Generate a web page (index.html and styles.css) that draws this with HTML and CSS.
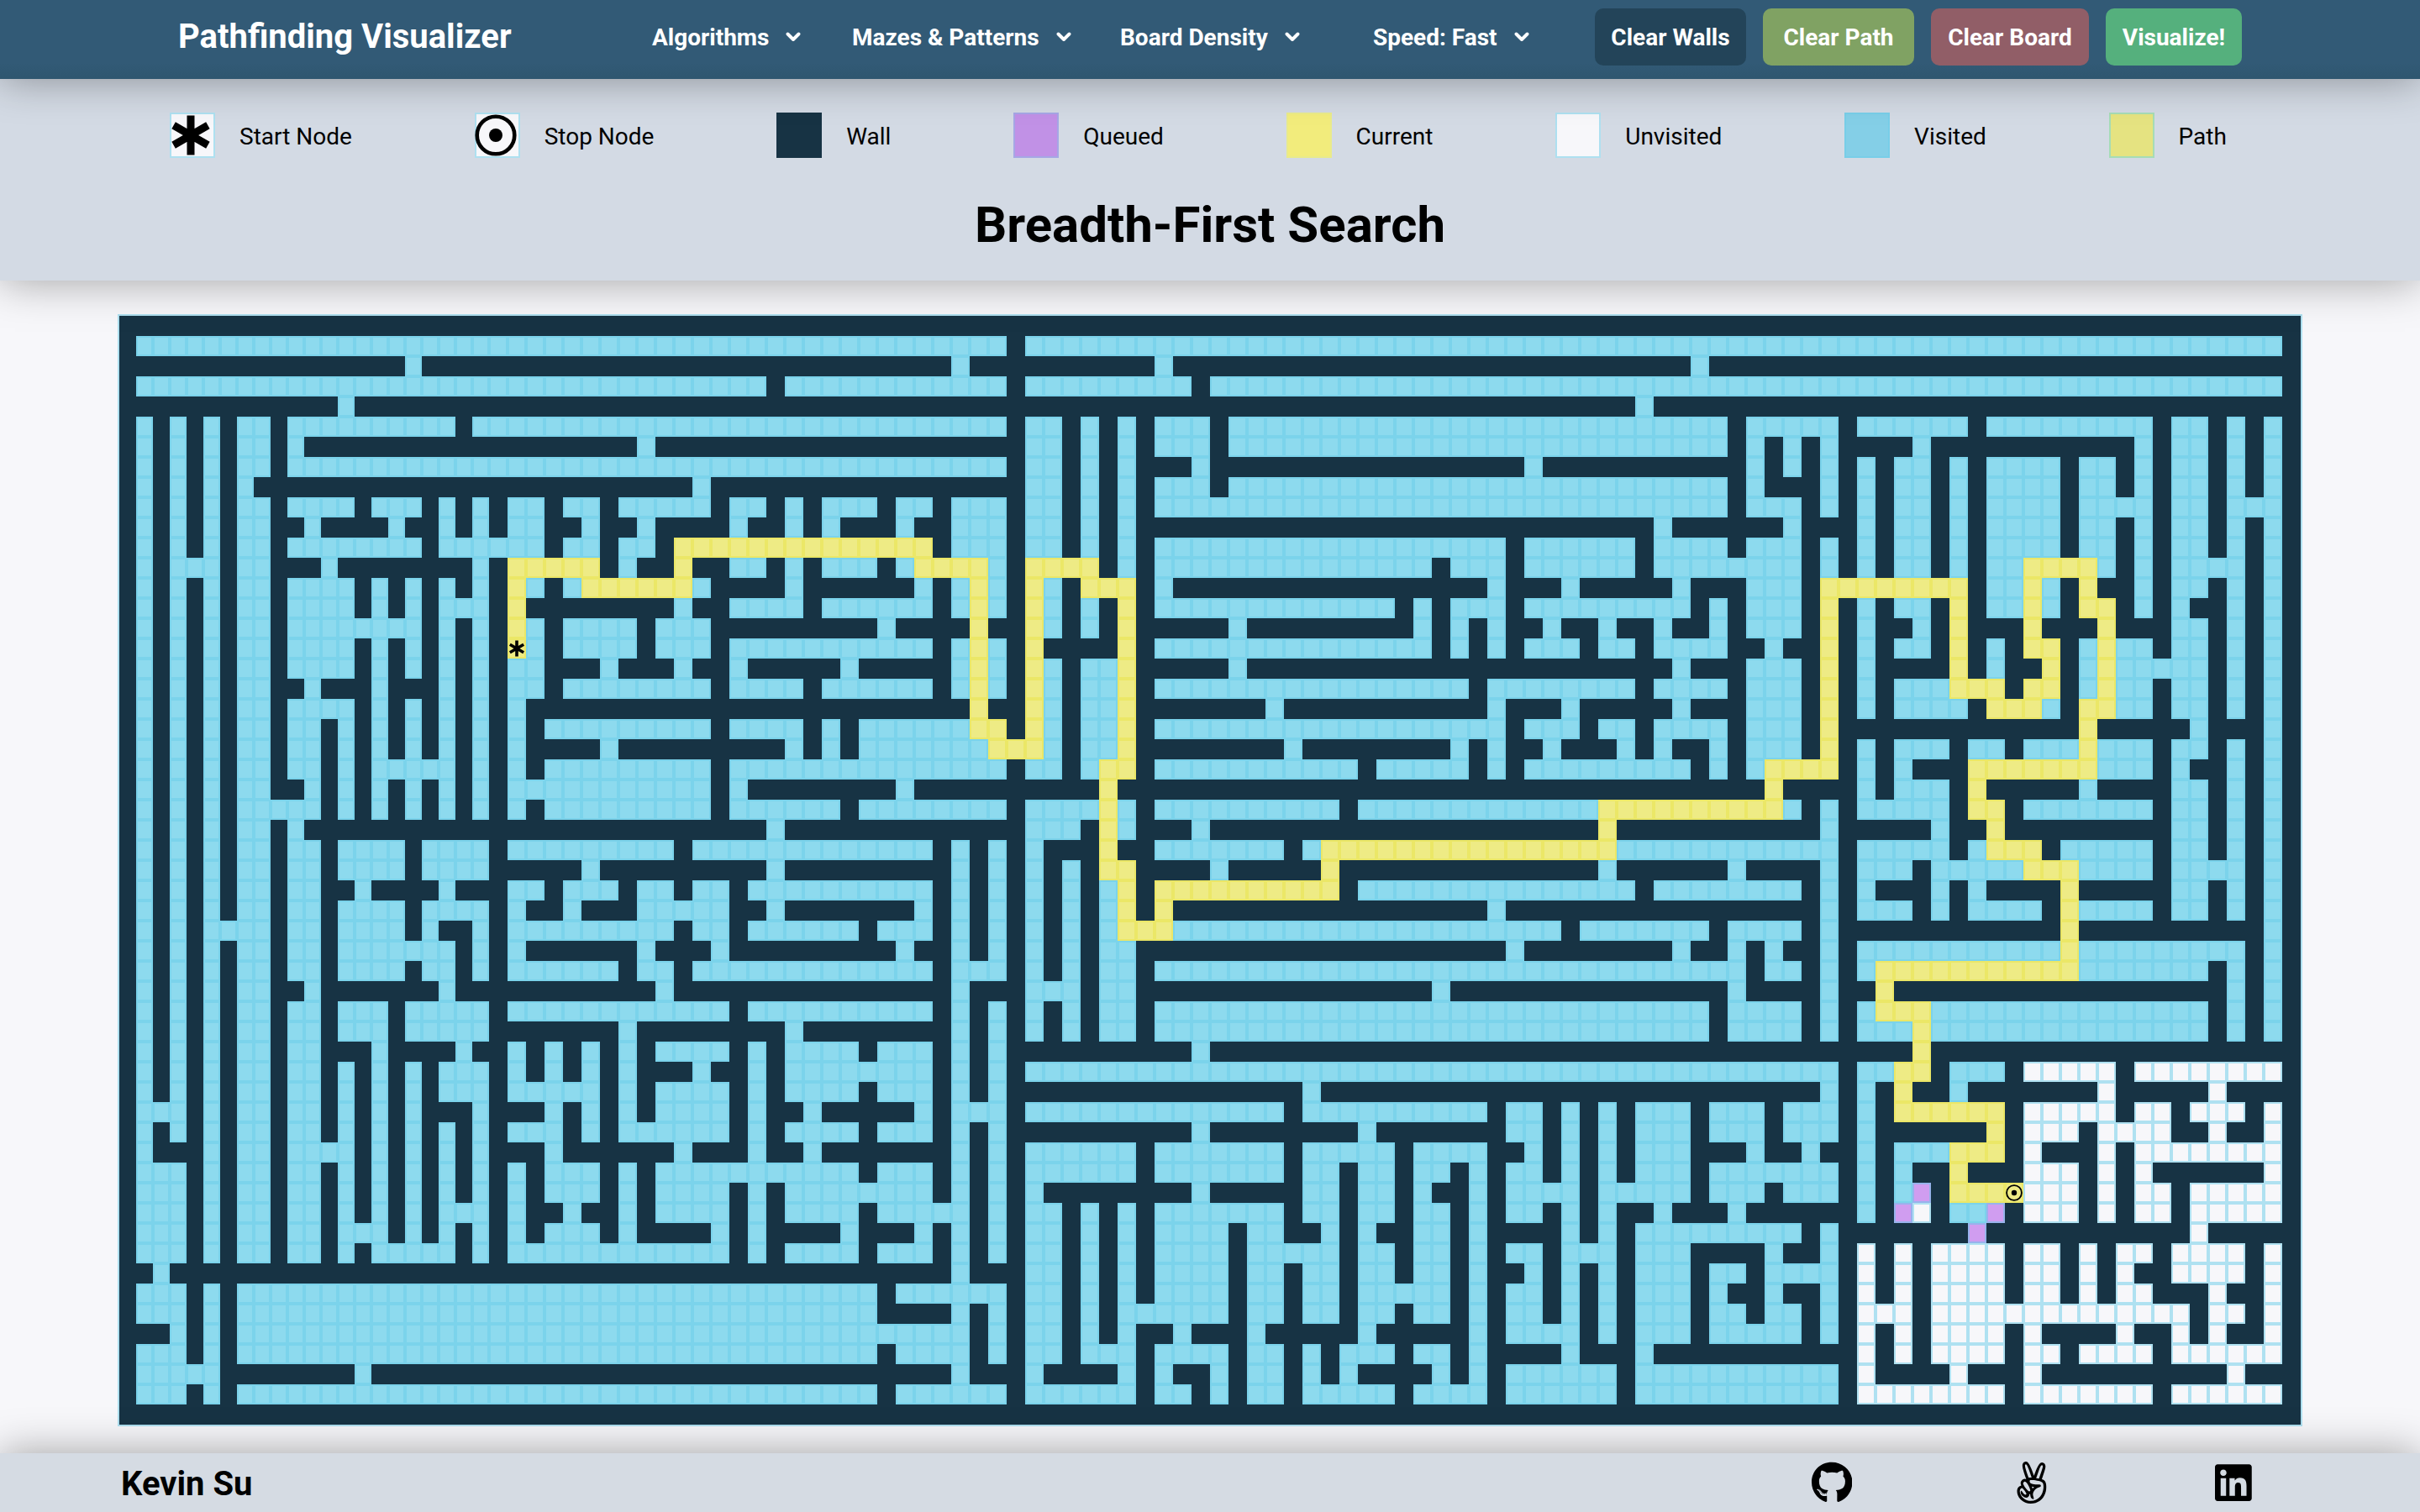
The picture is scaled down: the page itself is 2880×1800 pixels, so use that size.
FILE: index.html
```html
<!DOCTYPE html>
<html lang="en">
<head>
<meta charset="utf-8">
<title>Pathfinding Visualizer</title>
<link rel="stylesheet" href="styles.css">
</head>
<body>
<svg class="defs" aria-hidden="true">
  <symbol id="chevron" viewBox="0 0 18 12"><path d="M2.500 2.500 9 9l6.500-6.500" fill="none" stroke="currentColor" stroke-width="3.900" stroke-linecap="round" stroke-linejoin="round"/></symbol>
  <symbol id="asterisk" viewBox="0 0 50 50"><path d="M25 1.500v47M4.600 13.250l40.800 23.500M45.400 13.250 4.600 36.750" fill="none" stroke="currentColor" stroke-width="9"/></symbol>
  <symbol id="target" viewBox="0 0 50 50"><circle cx="25" cy="25" r="22.300" fill="none" stroke="currentColor" stroke-width="4.600"/><circle cx="25" cy="25" r="8" fill="currentColor"/></symbol>
</svg>

<nav class="navbar">
  <h1 class="brand">Pathfinding Visualizer</h1>
  <ul class="menu">
    <li class="menu-item algorithms">Algorithms<svg class="chevron"><use href="#chevron"/></svg></li>
    <li class="menu-item mazes">Mazes &amp; Patterns<svg class="chevron"><use href="#chevron"/></svg></li>
    <li class="menu-item density">Board Density<svg class="chevron"><use href="#chevron"/></svg></li>
    <li class="menu-item speed">Speed: Fast<svg class="chevron"><use href="#chevron"/></svg></li>
  </ul>
  <div class="actions">
    <button class="btn clear-walls">Clear Walls</button>
    <button class="btn clear-path">Clear Path</button>
    <button class="btn clear-board">Clear Board</button>
    <button class="btn visualize">Visualize!</button>
  </div>
</nav>

<header class="info">
  <ul class="legend">
    <li><span class="swatch unvisited"><svg><use href="#asterisk"/></svg></span>Start Node</li>
    <li><span class="swatch unvisited"><svg><use href="#target"/></svg></span>Stop Node</li>
    <li><span class="swatch wall"></span>Wall</li>
    <li><span class="swatch queued"></span>Queued</li>
    <li><span class="swatch current"></span>Current</li>
    <li><span class="swatch unvisited"></span>Unvisited</li>
    <li><span class="swatch visited"></span>Visited</li>
    <li><span class="swatch path"></span>Path</li>
  </ul>
  <h2 class="algorithm">Breadth-First Search</h2>
</header>

<main class="board-area">
  <div class="board" id="board"></div>
</main>

<footer class="footer">
  <span class="author">Kevin Su</span>
  <div class="links">
    <svg class="icon" viewBox="0 0 496 512"><path d="M165.900 397.400c0 2-2.300 3.600-5.200 3.600-3.300.3-5.600-1.300-5.600-3.600 0-2 2.300-3.600 5.200-3.600 3-.3 5.600 1.300 5.600 3.600zm-31.100-4.500c-.7 2 1.300 4.300 4.300 4.900 2.600 1 5.600 0 6.200-2s-1.300-4.300-4.300-5.200c-2.600-.7-5.500.3-6.200 2.300zm44.200-1.700c-2.900.7-4.900 2.600-4.600 4.900.3 2 2.900 3.300 5.900 2.600 2.900-.7 4.900-2.600 4.600-4.600-.3-1.900-3-3.200-5.900-2.900zM244.800 8C106.100 8 0 113.300 0 252c0 110.900 69.800 205.800 169.500 239.200 12.800 2.300 17.300-5.600 17.300-12.100 0-6.200-.3-40.400-.3-61.400 0 0-70 15-84.700-29.800 0 0-11.400-29.100-27.800-36.600 0 0-22.900-15.700 1.600-15.400 0 0 24.900 2 38.600 25.800 21.900 38.600 58.600 27.500 72.900 20.900 2.300-16 8.800-27.100 16-33.700-55.900-6.200-112.300-14.300-112.300-110.500 0-27.500 7.600-41.300 23.600-58.900-2.600-6.500-11.100-33.300 2.600-67.900 20.900-6.500 69 27 69 27 20-5.600 41.500-8.500 62.800-8.500s42.800 2.900 62.800 8.500c0 0 48.100-33.600 69-27 13.700 34.700 5.200 61.400 2.600 67.900 16 17.700 25.800 31.500 25.800 58.900 0 96.500-58.900 104.200-114.800 110.500 9.200 7.900 17 22.900 17 46.400 0 33.700-.3 75.400-.3 83.600 0 6.500 4.600 14.400 17.300 12.100C428.200 457.800 496 362.900 496 252 496 113.300 383.500 8 244.800 8zM97.200 352.900c-1.300 1-1 3.300.7 5.200 1.600 1.600 3.900 2.300 5.200 1 1.300-1 1-3.300-.7-5.200-1.600-1.600-3.900-2.300-5.200-1zm-10.800-8.100c-.7 1.300.3 2.900 2.300 3.900 1.600 1 3.600.7 4.300-.7.7-1.300-.3-2.900-2.300-3.900-2-.6-3.600-.3-4.300.7zm32.400 35.600c-1.600 1.300-1 4.300 1.300 6.200 2.300 2.300 5.200 2.600 6.500 1 1.300-1.300.7-4.300-1.300-6.200-2.200-2.300-5.200-2.600-6.500-1zm-11.400-14.700c-1.600 1-1.600 3.600 0 5.900 1.600 2.300 4.300 3.300 5.600 2.300 1.600-1.300 1.600-3.900 0-6.200-1.400-2.300-4-3.300-5.600-2z"/></svg>
    <svg class="icon" viewBox="0 0 448 512"><path d="M347.100 215.400c11.700-32.600 45.400-126.900 45.400-157.100 0-26.600-15.700-48.900-43.700-48.900-44.600 0-84.600 131.700-97.100 163.100C242 144 196.600 0 156.600 0c-31.100 0-45.700 22.900-45.700 51.700 0 35.300 34.200 126.800 46.600 162-6.300-2.300-13.100-4.300-20-4.300-23.400 0-48.300 29.100-48.300 52.600 0 8.900 4.900 21.400 8 29.700-36.900 10-51.100 34.600-51.100 71.700C46 435.600 114.400 512 210.600 512c118 0 191.400-88.600 191.400-202.900 0-43.100-6.900-82-54.900-93.700zM311.700 108c4-12.300 21.100-64.300 37.100-64.300 8.600 0 10.900 8.900 10.900 16 0 19.100-38.600 124.600-47.100 148l-34-6 33.100-93.700zM142.300 48.300c0-11.900 14.500-45.700 46.300 47.100l34.600 100.300c-15.600-1.300-27.700-3-35.400 1.400-10.900-28.800-45.500-119.700-45.500-148.800zM140 244c29.300 0 67.100 94.600 67.100 107.400 0 5.100-4.900 11.400-10.600 11.400-20.900 0-76.900-76.900-76.900-97.700.1-7.700 12.700-21.100 20.400-21.100zm184.300 186.300c-29.100 32-66.300 48.600-109.700 48.600-59.400 0-106.300-32.600-128.900-88.300-17.100-43.400 3.800-68.300 20.600-68.300 11.400 0 54.300 60.300 54.300 73.100 0 4.900-7.700 8.300-11.700 8.300-16.100 0-22.400-15.500-51.100-51.400-29.700 29.700 20.500 86.900 58.300 86.900 26.100 0 43.100-24.200 38-42 3.700 0 8.300.3 11.700-.6 1.100 27.100 9.100 59.400 41.700 61.700 0-.9 2-7.100 2-7.400 0-17.400-10.600-32.600-10.600-50.300 0-28.300 21.700-55.700 43.700-71.700 8-6 17.700-9.700 27.100-13.100 9.700-3.700 20-8 27.400-15.400-1.100-11.200-5.700-21.100-16.900-21.100-27.700 0-120.600 4-120.600-39.700 0-6.700.1-13.100 17.400-13.100 32.300 0 114.300 8 138.300 29.100 18.100 16.100 24.300 113.200-31 174.700zm-98.600-126c9.700 3.100 19.700 4 29.700 6-7.400 5.400-14 12-20.300 19.100-2.800-8.500-6.200-16.800-9.400-25.100z"/></svg>
    <svg class="icon" viewBox="0 0 448 512"><path d="M416 32H31.900C14.300 32 0 46.500 0 64.300v383.400C0 465.500 14.300 480 31.900 480H416c17.600 0 32-14.500 32-32.300V64.300c0-17.800-14.400-32.300-32-32.300zM135.400 416H69V202.200h66.500V416zm-33.200-243c-21.300 0-38.500-17.300-38.500-38.500S80.900 96 102.200 96c21.200 0 38.500 17.300 38.500 38.500 0 21.300-17.200 38.500-38.500 38.500zm282.100 243h-66.400V312c0-24.800-.5-56.700-34.500-56.700-34.600 0-39.900 27-39.900 54.900V416h-66.400V202.200h63.700v29.200h.9c8.900-16.800 30.600-34.500 62.900-34.500 67.200 0 79.700 44.300 79.700 101.900V416z"/></svg>
  </div>
</footer>
<script src="board.js"></script>
</body>
</html>
```
FILE: styles.css
```css
* { box-sizing: border-box; }

body {
  margin: 0;
  height: 1800px;
  display: flex;
  flex-direction: column;
  overflow: hidden;
  background: #f7f7fa;
  color: #000;
  font-family: Roboto, "Liberation Sans", sans-serif;
  font-size: 28px;
}

ul { list-style: none; margin: 0; padding: 0; }
.defs { display: none; }

/* Top bar */
.navbar {
  position: relative;
  z-index: 2;
  flex: none;
  height: 94px;
  padding: 10px 212px 16px;
  display: flex;
  align-items: center;
  background: linear-gradient(#325a76 80%, #2e566f);
  box-shadow: 0 0 50px rgba(0, 0, 0, .36);
  color: #fff;
}
.brand { width: 564px; margin: 0; font-size: 40px; line-height: 70px; font-weight: 700; white-space: nowrap; }
.menu { display: flex; font-weight: 700; line-height: 66px; padding-top: 2px; }
.menu-item { display: flex; align-items: center; white-space: nowrap; }
.algorithms { width: 238px; }
.mazes { width: 319px; }
.density { width: 301px; }
.speed { width: 264px; }
.chevron { width: 18px; height: 12px; margin: -2px 0 0 20px; }
.actions { display: flex; gap: 20px; }
.btn {
  width: 180px;
  height: 68px;
  padding: 2px 0 0;
  border: 0;
  border-radius: 10px;
  color: #fff;
  font: 700 28px/66px Roboto, "Liberation Sans", sans-serif;
  white-space: nowrap;
}
.clear-walls { background: #234459; }
.clear-path { background: #80a263; }
.clear-board { width: 188px; background: #915e67; }
.visualize { width: 162px; background: #55b07d; }

/* Legend and algorithm name */
.info {
  position: relative;
  z-index: 1;
  flex: none;
  height: 240px;
  padding: 40px 230px 0 202px;
  background: #d3dae4;
  box-shadow: 0 0 50px rgba(0, 0, 0, .36);
}
.legend { display: flex; justify-content: space-between; height: 54px; line-height: 57px; }
.legend li { display: flex; gap: 29px; }
.swatch { width: 54px; height: 54px; border: 2px solid; }
.swatch svg { display: block; width: 50px; height: 50px; margin-left: -2px; }
.swatch.unvisited { background: #f7f7fa; border-color: #aee0f0; }
.swatch.wall { background: #173344; border-color: #173344; }
.swatch.queued { background: #c191e6; border-color: #a6a6e5; }
.swatch.current { background: #f2ec7c; border-color: #e9ea8b; }
.swatch.visited { background: #84cfe7; border-color: #78cee8; }
.swatch.path { background: #e5e381; border-color: #a6dcb5; }
.algorithm { margin: 44px -28px 0 0; text-align: center; font-size: 60px; line-height: 71px; font-weight: 700; }

/* Board */
.board-area { flex: 1; padding: 40px 0 0 140px; }
.board {
  display: grid;
  grid-template-columns: repeat(22, 20px) repeat(98, 22px);
  grid-auto-rows: 24px;
  width: 2600px;
  border: 2px solid #aee0f0;
}
.cell { border: 2px solid #173344; background: #173344; }
.cell.unvisited { background: #f7f7fa; border-color: #afe1f1; }
.cell.visited { background: #8ddaee; border-color: #7bd3eb; }
.cell.queued { background: #d09df0; border-color: #98b3ec; }
.cell.path { background: #eeeb85; border-color: #ebe767; }
.cell svg { display: block; width: 20px; height: 20px; margin: 0 -1.500px; }

/* Footer */
.footer {
  position: relative;
  z-index: 1;
  flex: none;
  height: 70px;
  padding: 0 200px 0 144px;
  display: flex;
  align-items: center;
  justify-content: space-between;
  background: #d5dbe3;
  box-shadow: 0 0 50px rgba(0, 0, 0, .36);
}
.author { padding-top: 3px; font-size: 40px; line-height: 67px; font-weight: 700; }
.links { display: flex; justify-content: space-between; width: 524px; }
.icon { height: 50px; }
.icon:nth-child(2) { margin-right: 4px; }
```
FILE: board.js
```js
// Open columns of every row; everything else is a wall.
const OPEN = [
  "",
  "1-49 51-118",
  "17 47 58 87",
  "1-36 38-49 51-59 61-118",
  "13 84",
  "1 3 5 7-8 10-19 21-49 51-52 54 56 58-60 62-88 90-94 96-101 103-111 113-114 116 118",
  "1 3 5 7-8 10 30 51-52 54 56 58-60 62-88 90 92 94 99 111 113-114 116 118",
  "1 3 5 7-8 10-49 51-52 54 56 60 78 90 92 94 96 98-99 101 103-106 108-109 111 113-114 116 118",
  "1 3 5 7 33 51-52 54 56 58-60 62-88 90 94 96 98-99 101 103-106 108-109 111 113-114 116 118",
  "1 3 5 7-8 10-13 15-17 19 21 23-24 26-27 29-33 35-36 38 40-42 44-45 47-49 51-52 54 56 58-88 90-92 94 96 98-99 101 103-106 108-111 113-114 116-118",
  "1 3 5 7-8 11 16 19 21 23-24 27 30 35 38 40 44 47-49 51-52 54 56 85 92 96 98-99 101 103-106 108-109 111 113-114 116 118",
  "1 3 5 7-8 10-17 19-24 26-27 29-30 32-45 47-49 51-52 54 56 58-76 78-83 85-88 90-92 94 96 98-99 101 103-106 108-109 111 113-114 116 118",
  "1 3-5 7-8 12 21 23-27 29 32 35-36 38 40-42 44-49 51-54 56 58-72 74-76 78-83 85-92 94 96 98-99 101 103-109 111 113-116 118",
  "1 3 5 7-8 10-13 15 17 19 21 23-24 26-33 38 45 47-49 51-52 54-56 58 76 80 86 90-92 94-101 103-106 108 111 113-114 116 118",
  "1 3 5 7-8 10-13 15 17 19-21 23 32 35-38 40-45 47-49 51-52 54 56 58-70 72 74-76 78-86 88 90-92 94 96 98-99 101 103-106 108-109 111 113 116 118",
  "1 3 5 7-8 10-17 19 21 23-24 26-29 31-33 43 48 51-52 54 56 62 72 74 76 79 82 85 88 90-92 94 96 99 101 105 109 113-114 116 118",
  "1 3 5 7-8 10-13 15 17 19 21 23-24 26-29 31-33 35-45 47-49 51 56 58-72 74 76 78-80 82-83 85-88 91 94 96 98-99 101 103 105-106 108-111 113-114 116 118",
  "1 3 5 7-8 10-13 15 17 19 21 23-24 28 32 35 41 47-49 51-52 54-56 62 86 90-92 94 96 101 103 106 108-114 116 118",
  "1 3 5 7-8 11 15 19 21 23-24 26-33 35-38 40-45 47-49 51-52 54-56 58-74 76-83 85-88 90-92 94 96 98-103 105-106 108-111 113-114 116 118",
  "1 3 5 7-8 10-13 15 17 19 21 23 48 51-52 54-56 64 76 80 86 90-92 94 96 98-101 103-106 108-111 113-114 116 118",
  "1 3 5 7-8 10-11 13 15 17 19 21 23 25-33 35-38 40 42-49 51-52 54-56 58-76 78-80 82-83 85-88 90-92 94 108 114 118",
  "1 3 5 7-8 10-11 13 15 17 19 21 23 28 38 40 42-52 54-56 65 74 76 79 83 85 88 90-92 94 96 98-100 102-103 105-111 113-114 116 118",
  "1 3 5 7-8 10-11 13 15-19 21 23 25-33 35-49 51-52 54-56 58-68 70-74 76 78-86 88 90-94 96 98 102-111 113 116 118",
  "1 3 5 7-8 11 13 15 17 19 21 23-33 35 44 55 91 96 98-100 102 108 113-114 116 118",
  "1 3 5 7-11 13 15 17 19 21 23 25-33 35-40 42-49 51-56 58-67 69-92 94 96-100 102-103 105-111 113-114 116 118",
  "1 3 5 7-8 10 37 51-53 55-56 60 82 94 100 103 113-114 116 118",
  "1 3 5 7-8 10-11 13-16 18-21 23-31 33-45 47 49 51 55 58-64 66-94 96-100 102-105 107-111 113-114 116 118",
  "1 3 5 7-8 10-11 13-16 18-21 27 37 47 49 51 53 55-56 61 67 82 89 94 96-98 100-111 113-116 118",
  "1 3 5 7-8 10-11 14 19 23-24 26-28 30-31 33-34 36-45 47 49 51 53 55-56 58-67 69-83 85-92 94 96 100 102 107 113-114 116 118",
  "1 3 5 7-8 10-11 13-16 18-21 23 26 30-34 37 45 47 49 51 53 55-56 58 76 94 96-98 100 102-105 107-111 113-114 116 118",
  "1 3 5-8 10-11 13-16 18 21 23-31 33-34 36-41 43-45 47 49 51 53 55-79 81-87 89-92 94 107 118",
  "1 3 5 7-8 10-11 13-19 21 23 30 34 44 47 49 51 53 55-56 77 86 89 91 94 96-116 118",
  "1 3 5 7-8 10-11 13-16 18-19 21 23-28 30-31 33-45 47-49 51 53 55-56 58-89 91-92 94 96-114 116 118",
  "1 3 5 7-8 11 19 31 47 51-53 55-56 73 89 94 97 116 118",
  "1 3 5 7-8 10-11 13-15 17-21 23-34 36-45 47 49 51 53 55-56 58-87 89-92 94 96-114 116 118",
  "1 3 5 7-8 10-11 13-15 17-21 29 38 47 49 51 53 55-56 58-87 89-92 94 96-114 116 118",
  "1 3 5 7-8 10-11 15 20 23 25 27 29 31-34 36 38-41 43-45 47 49 60 99",
  "1 3 5 7-8 10-11 13 15 17 19-21 23 25 27 29 33 36 38-45 47 49 51-94 96-99 101-103 105-109 111-118",
  "1 3 5 7-8 10-11 13 15 17 19-21 23-27 29 31-34 36 38-41 43-45 47 49 66 94 96 98 101 109 115",
  "1-3 5 7-8 10-11 13 15 17 21 25 27 29 31-34 36 39 45 47-49 51-64 66-75 77-78 80 82 84-86 88-90 92-94 96 98-103 105-109 111-112 114-116 118",
  "1 3 5 7-8 10-11 13 15 17 19 21 23-25 27 29-34 36 38-41 43-45 47 49 60 69 77-78 80 82 84-86 88-90 92-94 96 103 105-107 109-112 115 118",
  "1 5 7-8 10-13 15 17 19 21 25 32 36 39 47 49 51-56 58-64 66-70 72-75 78 80 82 84-86 90 93 96 98-103 105 109 111-118",
  "1-3 5 7-8 10-11 13 15 17 19 21 23 25-27 29 31-41 43-45 47 49 51-56 58-64 66-67 69-70 72-73 75 77-78 80 82 84-86 88-94 96 98 101 105-107 109 111 118",
  "1-3 5 7-8 10-11 13 15 17 19 21 23 25-27 29 31-34 36 38-45 47 49 51 60 66-67 69-70 72 75 77-80 82-86 88-90 92-94 96 98-99 101-107 109 111-112 114-118",
  "1-3 5 7-8 10-11 13 15 17 19-21 23 26 29 31-34 36 38-41 43-47 49 51-52 54 56 58-64 66-67 69-70 72-73 75 77-78 80 82 85 89 96 98-99 101-103 105-107 109 111-112 114-118",
  "1-3 5 7-8 10-11 13-15 17 19 21 23 25-27 29 34 36 41 45 47 49 51-52 54 56 58-61 63-64 67 69 72-73 75 80 82 84-92 94 102 114",
  "1-3 5 7-8 10-11 13 15-19 21 23-34 36 38-41 43-45 47 49 51-52 54 56 58-61 63-67 69-70 72-73 75 77-78 80-82 84-86 91 94 96 98 100-103 105-106 108 110-111 113-116 118",
  "2 47 51-52 54 56 58-61 63-64 66-67 69-70 72-73 75 78 80 82 84-86 88-89 91-94 96 98 100-103 105-106 108 110 113-116 118",
  "1-3 5 7-42 44-49 51-52 54 56 58-61 63-64 66-67 69-73 75 77-78 80 82 84-86 88 91 94 96 98 100-103 105-106 108 110-111 115 118",
  "1-3 5 7-42 47 49 51-52 54 56-61 63-64 66-67 69-70 72-73 75 77-78 80 82 84-86 88-89 91-92 94 96-98 100-113 115-116 118",
  "3 5 7-47 49 51-52 54 56 59 63 69 75 77-80 82 84-86 88-92 94 96 98 100-103 105 110 113 115 118",
  "1-3 5 7-42 44-47 49 51-52 54-56 58-61 63-64 66 68-70 72-73 75 80 84 96 98 100-103 105-106 108-111 113-118",
  "1-5 14 47 51 56 58 61 63-64 66 68 73 75 77-82 84-94 96 101 105 116",
  "1-3 5 7-42 44-49 51-56 58-59 61 63-64 66-70 72-75 77-82 84-94 96-103 105-111 113-118",
  "",
];

// Corner cells of the shortest path, start to stop, as [column, row].
const ROUTE = [
  [23,16],[23,12],[27,12],[27,13],[32,13],[32,11],[45,11],[45,12],[48,12],[48,20],
  [49,20],[49,21],[51,21],[51,12],[54,12],[54,13],[56,13],[56,22],[55,22],[55,27],
  [56,27],[56,30],[58,30],[58,28],[67,28],[67,26],[82,26],[82,24],[91,24],[91,22],
  [94,22],[94,13],[101,13],[101,18],[103,18],[103,19],[105,19],[105,18],[106,18],
  [106,16],[105,16],[105,12],[108,12],[108,14],[109,14],[109,19],[108,19],[108,22],
  [102,22],[102,24],[103,24],[103,26],[105,26],[105,27],[107,27],[107,32],[97,32],
  [97,34],[99,34],[99,37],[98,37],[98,39],[103,39],[103,41],[101,41],[101,43],[104,43],
];
const QUEUED = [[99,43],[98,44],[103,44],[102,45]];
const COLS = 120;

const cells = OPEN.map((spec, row) => {
  const line = new Array(COLS).fill("wall");
  for (const run of spec.split(" ").filter(Boolean)) {
    const [from, to = from] = run.split("-").map(Number);
    for (let col = from; col <= to; col++) {
      const unvisited =
        (row >= 37 && col >= 105) || (row >= 46 && col >= 96) ||
        (row === 45 && col >= 103) || (row === 44 && col === 99);
      line[col] = unvisited ? "unvisited" : "visited";
    }
  }
  return line;
});

for (let i = 1; i < ROUTE.length; i++) {
  let [x, y] = ROUTE[i - 1];
  const [endX, endY] = ROUTE[i];
  cells[y][x] = "path";
  while (x !== endX || y !== endY) {
    x += Math.sign(endX - x);
    y += Math.sign(endY - y);
    cells[y][x] = "path";
  }
}
for (const [x, y] of QUEUED) cells[y][x] = "queued";

const icon = (name) => `<svg><use href="#${name}"/></svg>`;
const [start, stop] = [ROUTE[0], ROUTE[ROUTE.length - 1]];
document.getElementById("board").innerHTML = cells
  .map((line, y) => line.map((state, x) => {
    const mark = x === start[0] && y === start[1] ? icon("asterisk")
      : x === stop[0] && y === stop[1] ? icon("target") : "";
    return `<div class="cell ${state}">${mark}</div>`;
  }).join(""))
  .join("");
```
